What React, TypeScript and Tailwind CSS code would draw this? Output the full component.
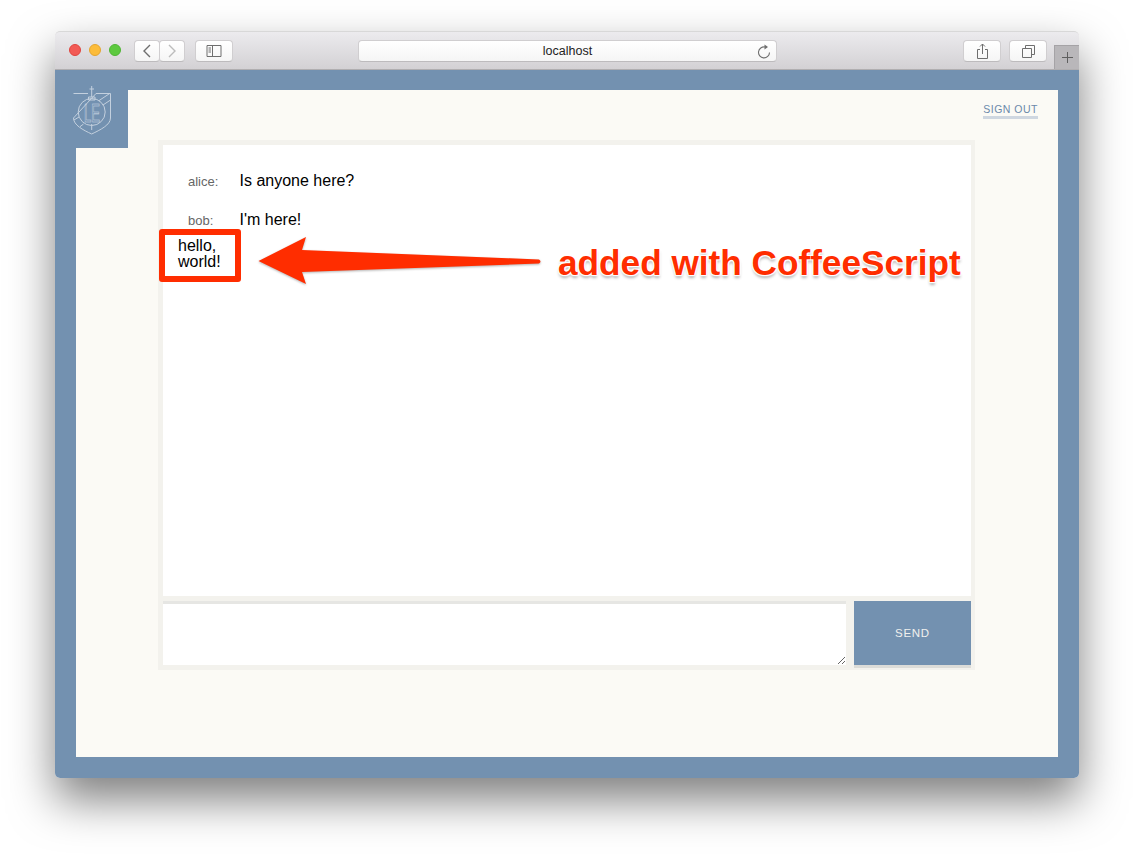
const sans = "font-['Liberation_Sans',Arial,sans-serif]";

function ToolButton({ children, className }: { children: React.ReactNode; className: string }) {
  return (
    <div className={`h-[22px] flex items-center justify-center rounded-[4px] bg-gradient-to-b from-[#ffffff] to-[#f5f5f5] border border-[#d0ced0] border-b-[#bdbbbd] ${className}`}>
      {children}
    </div>
  );
}

export default function App() {
  return (
    <div className={`min-h-[857px] bg-white pt-[31px] pl-[55px] overflow-hidden ${sans}`}>
      <div className="w-[1024px] h-[747px] rounded-[5px] flex flex-col shadow-[0_22px_45px_rgba(0,0,0,0.5)]">
        {/* title bar */}
        <div className="h-[39px] shrink-0 flex items-start pl-[14px] rounded-t-[5px] border-t border-[#d8d8d8] border-b border-b-[#b0aeb0] bg-gradient-to-b from-[#ecebee] to-[#d3d1d4]">
          <div className="flex gap-2 mt-[12px]">
            <span className="w-3 h-3 rounded-full bg-[#f25a55] border border-[#e0443e]" />
            <span className="w-3 h-3 rounded-full bg-[#fcbc3a] border border-[#e5a52e]" />
            <span className="w-3 h-3 rounded-full bg-[#5dc93f] border border-[#4fb534]" />
          </div>
          <div className="flex ml-[13px] mt-[8px]">
            <ToolButton className="w-[26px]">
              <svg width="12" height="16" viewBox="0 0 12 16" fill="none" stroke="#6e6e6e" strokeWidth="1.4"><path d="M9 2 L3 8 L9 14" /></svg>
            </ToolButton>
            <ToolButton className="w-[26px] -ml-px">
              <svg width="12" height="16" viewBox="0 0 12 16" fill="none" stroke="#bcbcbc" strokeWidth="1.4"><path d="M3 2 L9 8 L3 14" /></svg>
            </ToolButton>
          </div>
          <ToolButton className="w-[38px] ml-[10px] mt-[8px]">
            <svg width="16" height="12" viewBox="0 0 16 12" fill="none" stroke="#6e6e6e"><path d="M1 .5 H15 V11.5 H1 Z M6.5 .5 V11.5" /><path d="M2.5 3 H5 M2.5 5 H5 M2.5 7 H5" strokeWidth="1" /></svg>
          </ToolButton>
          <ToolButton className="w-[419px] ml-[125px] mt-[8px] relative">
            <span className="text-[12.5px] text-[#222] mt-[1px]">localhost</span>
            <svg width="14" height="15" viewBox="0 0 14 15" fill="none" stroke="#6e6e6e" strokeWidth="1.1" className="absolute right-[5px] top-[3px]">
              <path d="M8 3 A5.5 5.5 0 1 0 12.5 8.5" />
              <path d="M7.5 .5 L11 3 L7.5 5.5 Z" fill="#6e6e6e" stroke="none" />
            </svg>
          </ToolButton>
          <ToolButton className="w-[38px] ml-[186px] mt-[8px]">
            <svg width="13" height="17" viewBox="0 0 13 17" fill="none" stroke="#6e6e6e"><path d="M4 6.5 H1.5 V15.5 H11.5 V6.5 H9 M6.5 11 V1 M4 3.5 L6.5 1 L9 3.5" /></svg>
          </ToolButton>
          <ToolButton className="w-[38px] ml-[8px] mt-[8px]">
            <svg width="13" height="13" viewBox="0 0 13 13" fill="none" stroke="#6e6e6e"><path d="M.5 3.5 H9.5 V12.5 H.5 Z M3.5 3.5 V.5 H12.5 V9.5 H9.5" /></svg>
          </ToolButton>
          <div className="w-[25px] h-[24px] ml-[7px] mt-[13px] flex items-center justify-center bg-[#b9b7ba] border-l border-t border-[#a5a3a6]">
            <svg width="11" height="11" viewBox="0 0 11 11" stroke="#5f5f5f"><path d="M5.5 0 V11 M0 5.5 H11" /></svg>
          </div>
        </div>

        {/* page */}
        <div className="flex-1 rounded-b-[5px] bg-[#7391b0] px-[21px] pt-[20px] pb-[21px]">
          <main className="relative h-[667px] bg-[#fbfaf5]">
            <div className="absolute top-0 left-0 w-[52px] h-[58px] bg-[#7391b0]">
              <svg width="52" height="58" viewBox="0 0 52 58" fill="none" stroke="#c3d0de" strokeWidth="1" className="absolute -left-[3px] -top-[4px] overflow-visible">
                <path d="M.5 7.5 H15 M23 7.5 H37.5 V32 C37.5 39 27 44 18.7 48 C10 44 .5 39 .5 32 Z" />
                <circle cx="18.7" cy="26" r="13.5" />
                <path d="M18.7 0 V11 M16.5 3 H21 M15.5 11 H22 V14 H15.5 Z M18.7 38 V44 M26 14.6 L37 7.3 M30 19 L37.5 14 M1 34 L6 31 M7 40.7 L10.5 38" />
                <text x="11" y="36" fontSize="26" stroke="#d5dfe9" strokeWidth="0.7" fontFamily="Liberation Sans" textLength="16" lengthAdjust="spacingAndGlyphs">LE</text>
              </svg>
            </div>

            <div className="flex justify-end pt-[13px] pr-[20px]">
              <a className="text-[10.5px] leading-[13px] tracking-[0.5px] text-[#6a89aa] border-b-[3px] border-[#cfd7e0]">SIGN OUT</a>
            </div>

            {/* chat */}
            <section className="ml-[82px] mt-[21px] w-[817px] h-[530px] bg-[#f3f2ed] p-[5px] pr-[4px] flex flex-col gap-[5px]">
              <div className="h-[451px] bg-white pt-[26px] text-black">
                <div className="flex pl-[25px] h-[20px] items-center">
                  <span className="w-[51.5px] text-[13px] text-[#666] mt-[1px]">alice:</span>
                  <span className="text-[16px]">Is anyone here?</span>
                </div>
                <div className="flex pl-[25px] h-[20px] items-center mt-[19px]">
                  <span className="w-[51.5px] text-[13px] text-[#666] mt-[1px]">bob:</span>
                  <span className="text-[16px]">I'm here!</span>
                </div>
                <div className="ml-[15px] mt-[8px] w-[50px] text-[16px] leading-4">hello, world!</div>
              </div>
              <div className="flex h-[64px] gap-[8px]">
                <textarea className="w-[683px] h-full bg-white border-t-[3px] border-[#e6e6e3] outline-none resize" />
                <button className="w-[117px] h-[67px] pt-[2px] bg-[#7391b0] border-b-[3px] border-[#dcdcd8] text-[#f0f0ee] text-[11.5px] tracking-[0.7px]">SEND</button>
              </div>
            </section>

            {/* annotation */}
            <div className="absolute left-[83px] top-[139px] w-[82px] h-[53px] rounded-[3px] border-[6px] border-[#ff2d00]" />
            <svg width="300" height="60" viewBox="0 0 300 60" className="absolute left-[172px] top-[143px] overflow-visible drop-shadow-[0_1px_1px_rgba(0,0,0,0.3)]">
              <path d="M10.5 28 L58 4 L54 17 L291 26.5 Q294 28.5 291 30.5 L54 39 L58 51 Z" fill="#ff2d00" />
            </svg>
            <div className="absolute left-[482px] top-[151px] text-[35.2px] leading-[44px] font-bold whitespace-nowrap text-[#ff2d00] [text-shadow:0_0_2px_#fff,1px_1px_1px_#fff,-1px_-1px_1px_#fff,1px_-1px_1px_#fff,-1px_1px_1px_#fff,0_3px_3px_rgba(0,0,0,0.3)]">
              added with CoffeeScript
            </div>
          </main>
        </div>
      </div>
    </div>
  );
}
